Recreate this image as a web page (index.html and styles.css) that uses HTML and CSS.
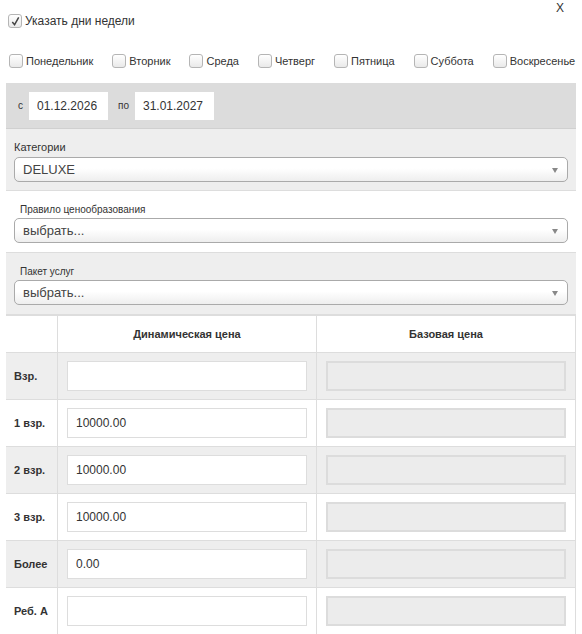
FILE: index.html
```html
<!DOCTYPE html>
<html lang="ru">
<head>
  <meta charset="UTF-8">
  <meta name="viewport" content="width=device-width, initial-scale=1.0">
  <title>Цены по дням недели</title>
  <link rel="stylesheet" href="styles.css">
</head>
<body>
  <div class="dialog">
    <a class="close" href="#">X</a>

    <div class="weekdays-toggle">
      <label class="check">
        <span class="box checked">
          <svg viewBox="0 0 12 12" width="11" height="11"><path d="M2.5 6.5 L5 9.5 L9.5 1.5" fill="none" stroke="#444" stroke-width="1.6"/></svg>
        </span>
        Указать дни недели
      </label>
    </div>

    <div class="days">
      <label class="check"><span class="box"></span>Понедельник</label>
      <label class="check"><span class="box"></span>Вторник</label>
      <label class="check"><span class="box"></span>Среда</label>
      <label class="check"><span class="box"></span>Четверг</label>
      <label class="check"><span class="box"></span>Пятница</label>
      <label class="check"><span class="box"></span>Суббота</label>
      <label class="check"><span class="box"></span>Воскресенье</label>
    </div>

    <div class="period">
      <span class="period-label">с</span>
      <input class="date" type="text" value="01.12.2026">
      <span class="period-label">по</span>
      <input class="date" type="text" value="31.01.2027">
    </div>

    <div class="field field-gray">
      <div class="field-label">Категории</div>
      <div class="select">DELUXE<span class="arrow"></span></div>
    </div>

    <div class="field">
      <div class="field-label small">Правило ценообразования</div>
      <div class="select">выбрать...<span class="arrow"></span></div>
    </div>

    <div class="field field-gray">
      <div class="field-label small">Пакет услуг</div>
      <div class="select">выбрать...<span class="arrow"></span></div>
    </div>

    <table class="prices">
      <thead>
        <tr>
          <th class="col-name"></th>
          <th>Динамическая цена</th>
          <th>Базовая цена</th>
        </tr>
      </thead>
      <tbody>
        <tr class="odd">
          <td class="col-name">Взр.</td>
          <td><input class="price" type="text" value=""></td>
          <td><input class="price" type="text" disabled></td>
        </tr>
        <tr>
          <td class="col-name">1 взр.</td>
          <td><input class="price" type="text" value="10000.00"></td>
          <td><input class="price" type="text" disabled></td>
        </tr>
        <tr class="odd">
          <td class="col-name">2 взр.</td>
          <td><input class="price" type="text" value="10000.00"></td>
          <td><input class="price" type="text" disabled></td>
        </tr>
        <tr>
          <td class="col-name">3 взр.</td>
          <td><input class="price" type="text" value="10000.00"></td>
          <td><input class="price" type="text" disabled></td>
        </tr>
        <tr class="odd">
          <td class="col-name">Более</td>
          <td><input class="price" type="text" value="0.00"></td>
          <td><input class="price" type="text" disabled></td>
        </tr>
        <tr>
          <td class="col-name">Реб. А</td>
          <td><input class="price" type="text" value=""></td>
          <td><input class="price" type="text" disabled></td>
        </tr>
      </tbody>
    </table>
  </div>
</body>
</html>
```

FILE: styles.css
```css
body {
  margin: 0;
  padding: 0 6px;
  background: #fff;
  font-family: "Liberation Sans", Arial, sans-serif;
  color: #333;
  font-size: 12px;
}
.dialog {
  position: relative;
  width: 570px;
}
.close {
  position: absolute;
  top: 1px;
  right: 12px;
  color: #333;
  text-decoration: none;
  font-size: 12px;
}
.check {
  display: flex;
  align-items: center;
  gap: 3px;
  white-space: nowrap;
}
.box {
  display: inline-flex;
  align-items: center;
  justify-content: center;
  width: 12px;
  height: 12px;
  border: 1px solid #b5b5b5;
  border-radius: 3px;
  background: linear-gradient(#fff, #e9e9e9);
}
.weekdays-toggle {
  height: 42px;
  display: flex;
  align-items: center;
  padding-left: 2px;
}
.days {
  display: flex;
  align-items: center;
  gap: 19px;
  height: 37px;
  padding: 0 0 4px 3px;
  font-size: 11px;
}
.period {
  display: flex;
  align-items: center;
  height: 45px;
  padding-left: 12px;
  background: #dcdcdc;
  border-bottom: 1px solid #d0d0d0;
}
.period-label {
  font-size: 10px;
  margin-right: 6px;
}
.date {
  width: 79px;
  height: 28px;
  box-sizing: border-box;
  border: none;
  padding: 0 8px;
  margin-right: 10px;
  font: 12px "Liberation Sans", Arial, sans-serif;
  color: #333;
}
.field {
  height: 61px;
  padding: 0 8px;
  border-bottom: 1px solid #ddd;
}
.field-gray {
  background: #eee;
}
.field-label {
  padding-top: 12px;
  height: 16px;
  font-size: 11px;
}
.field-label.small {
  padding: 13px 0 0 6px;
  height: 14px;
  font-size: 10px;
}
.select {
  position: relative;
  height: 23px;
  line-height: 23px;
  padding-left: 8px;
  border: 1px solid #aaa;
  border-radius: 5px;
  background: linear-gradient(#fff 0%, #fff 45%, #eee 100%);
  font-size: 13px;
  color: #444;
}
.arrow {
  position: absolute;
  right: 9px;
  top: 10px;
  border-left: 3.5px solid transparent;
  border-right: 3.5px solid transparent;
  border-top: 5px solid #888;
}
.prices {
  width: 570px;
  border-collapse: collapse;
  table-layout: fixed;
}
.prices th,
.prices td {
  border: 1px solid #ddd;
  padding: 0 9px;
}
.prices tr > :first-child {
  border-left: none;
}
.prices tbody tr:last-child td {
  border-bottom: none;
}
.prices th {
  height: 36px;
  font-size: 11px;
  font-weight: bold;
  color: #333;
}
.prices th.col-name,
.prices td.col-name {
  width: 43px;
  padding: 0 0 0 8px;
  white-space: nowrap;
}
.prices td {
  height: 46px;
}
.prices td.col-name {
  font-size: 11px;
  font-weight: bold;
}
.prices tr.odd td {
  background: #eee;
}
.price {
  display: block;
  width: 100%;
  height: 30px;
  box-sizing: border-box;
  border: 1px solid #ddd;
  background: #fff;
  padding: 0 8px;
  font: 12px "Liberation Sans", Arial, sans-serif;
  color: #333;
}
.price:disabled {
  border: 2px solid #dcdcdc;
  background: #ececec;
}
```
